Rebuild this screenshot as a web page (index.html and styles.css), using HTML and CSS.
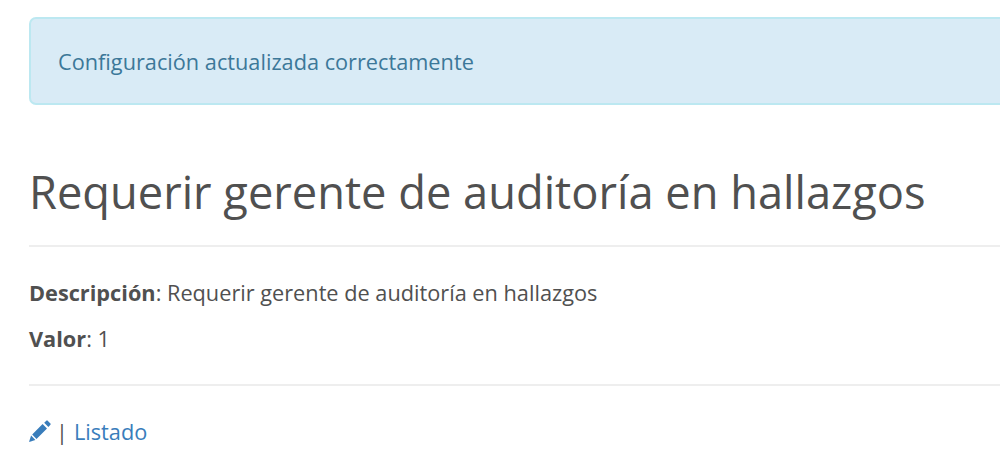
FILE: index.html
```html
<!DOCTYPE html>
<html lang="es">
<head>
<meta charset="utf-8">
<title>Configuración</title>
<link rel="stylesheet" href="styles.css">
</head>
<body>
<main class="page">
<div class="alert"><span>Configuración actualizada correctamente</span></div>
<h1 class="title"><span>Requerir gerente de auditoría en hallazgos</span></h1>
<hr class="rule">
<div class="details">
<p><strong>Descripción</strong>: Requerir gerente de auditoría en hallazgos</p>
<p><strong>Valor</strong>: 1</p>
</div>
<hr class="rule">
<nav class="actions">
<a href="#" aria-label="Editar"><svg class="pencil" viewBox="0 0 22 22"><path d="M0 22 2.1 15.6 6.4 19.9ZM3.2 14.5 13.6 4.1 18 8.5 7.5 18.9ZM15.2 2.8 17.3.7Q18 0 18.7.7L21.4 3.4Q22.1 4.1 21.4 4.8L19.4 6.9Z"/></svg></a>
<span class="sep">|</span>
<a href="#">Listado</a>
</nav>
</main>
</body>
</html>
```
FILE: styles.css
```css
* { box-sizing: border-box; }
body { margin: 0; overflow: hidden; background: #fff; color: #505050; font-family: "Open Sans", sans-serif; font-size: 21.72px; line-height: 32px; }
.page { padding: 17px 0 0 29px; }
.alert { height: 88px; padding: 28px 27px; margin-right: -10px; border: 2px solid #bce8f1; border-radius: 7px; background: #d9ebf6; color: #3c7899; line-height: 30px; }
.title { margin: 59px 0 0; height: 81px; font-size: 45.25px; font-weight: 400; line-height: 56px; white-space: nowrap; }
.rule { margin: 0; border: 0; height: 2px; background: #eee; }
.details { height: 137px; padding-top: 30px; }
.details p { margin: 0 0 14px; white-space: nowrap; }
.actions { display: flex; align-items: center; height: 32px; margin-top: 30px; }
.actions a { color: #397dbb; text-decoration: none; }
.pencil { display: block; width: 22px; height: 22px; margin-top: -2px; fill: currentColor; }
.sep { margin: 0 6px 0 5px; }
```
